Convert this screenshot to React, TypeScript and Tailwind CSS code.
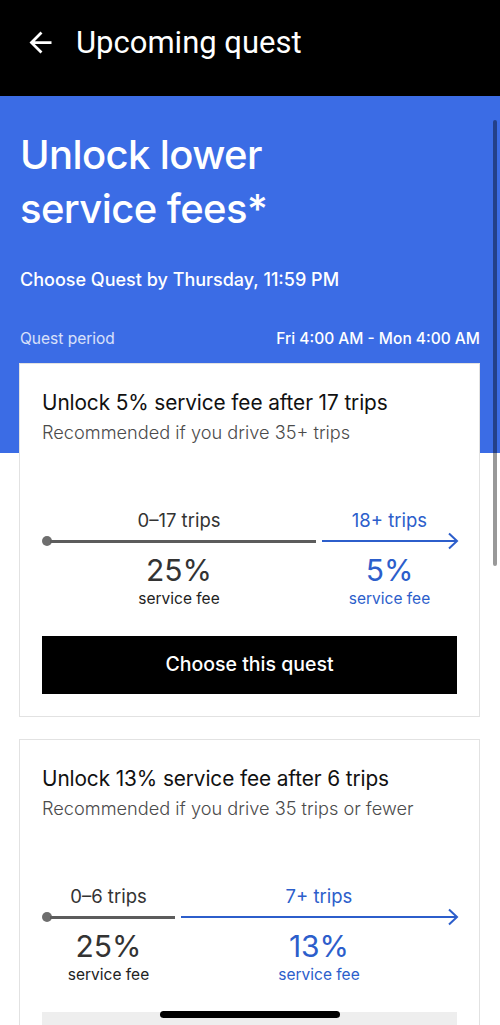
import React from "react";

type Quest = {
  title: string;
  note: string;
  split: number;
  lowLabel: string;
  highLabel: string;
  lowFee: string;
  highFee: string;
  cta: boolean;
};

const quests: Quest[] = [
  {
    title: "Unlock 5% service fee after 17 trips",
    note: "Recommended if you drive 35+ trips",
    split: 274,
    lowLabel: "0–17 trips",
    highLabel: "18+ trips",
    lowFee: "25%",
    highFee: "5%",
    cta: true,
  },
  {
    title: "Unlock 13% service fee after 6 trips",
    note: "Recommended if you drive 35 trips or fewer",
    split: 133,
    lowLabel: "0–6 trips",
    highLabel: "7+ trips",
    lowFee: "25%",
    highFee: "13%",
    cta: false,
  },
];

function BackArrow() {
  return (
    <svg width="33" height="33" viewBox="0 0 24 24" fill="white">
      <path d="M20 11H7.83l5.59-5.59L12 4l-8 8 8 8 1.41-1.41L7.83 13H20v-2z" />
    </svg>
  );
}

function QuestCard({ q }: { q: Quest }) {
  return (
    <div className="border border-[#e2e2e2] bg-white px-[22px] pt-[27px] pb-[22px]">
      <p className="text-[20.8px] leading-[24px] tracking-[-0.1px] text-[#111]">{q.title}</p>
      <p className="mt-[5px] text-[18.2px] leading-[24px] font-light text-[#4b4b4b]">{q.note}</p>

      <div className="mt-[65px] flex gap-[6px]">
        <div className="flex shrink-0 flex-col items-center" style={{ width: q.split }}>
          <span className="text-[18.5px] leading-[22px] text-[#333]">{q.lowLabel}</span>
          <div className="mt-[5px] flex h-[10px] w-full items-center">
            <span className="h-[10px] w-[10px] shrink-0 rounded-full bg-[#6e6e6e]" />
            <span className="-ml-[2px] h-[3px] flex-1 bg-[#5c5c5c]" />
          </div>
          <span className="mt-[7px] text-[30px] leading-[34px] text-[#333]">{q.lowFee}</span>
          <span className="mt-[2px] text-[15.5px] leading-[20px] text-[#222]">service fee</span>
        </div>
        <div className="flex flex-1 flex-col items-center">
          <span className="text-[18.5px] leading-[22px] text-[#2c5ecb]">{q.highLabel}</span>
          <div className="relative mt-[5px] flex h-[10px] w-full items-center">
            <span className="h-[2px] flex-1 bg-[#2c5ecb]" />
            <svg
              width="12"
              height="18"
              viewBox="0 0 12 18"
              className="absolute -right-[2px] top-1/2 -translate-y-1/2"
              fill="none"
              stroke="#2c5ecb"
              strokeWidth="2"
            >
              <path d="M2 1.5l8 7.5-8 7.5" />
            </svg>
          </div>
          <span className="mt-[7px] text-[30px] leading-[34px] text-[#2c5ecb]">{q.highFee}</span>
          <span className="mt-[2px] text-[15.5px] leading-[20px] text-[#2c5ecb]">service fee</span>
        </div>
      </div>

      {q.cta ? (
        <button className="mt-[27px] flex h-[58px] w-full items-center justify-center bg-black text-[19.5px] font-medium text-white">
          Choose this quest
        </button>
      ) : (
        <div className="mt-[27px] h-[58px] w-full bg-[#eeeeee]" />
      )}
    </div>
  );
}

export default function App() {
  return (
    <div
      className="relative h-[1025px] w-[500px] overflow-hidden bg-white"
      style={{ fontFamily: "Inter, 'Noto Sans', sans-serif" }}
    >
      <header className="flex h-[96px] items-start gap-[19px] bg-black pl-[24px] pt-[26px]">
        <BackArrow />
        <h1
          className="-mt-[3px] text-[31px] leading-[40px] text-white"
          style={{ fontFamily: "Roboto, sans-serif" }}
        >
          Upcoming quest
        </h1>
      </header>

      <section className="bg-[#3b6ce5] px-[20px] pt-[32px] pb-[104px] text-white">
        <h2 className="text-[40px] leading-[54px] font-medium tracking-[-0.6px]">
          Unlock lower
          <br />
          service fees*
        </h2>
        <p className="mt-[32px] text-[18px] leading-[24px] font-medium">Choose Quest by Thursday, 11:59 PM</p>
        <div className="mt-[37px] flex items-center justify-between text-[15.5px] leading-[20px]">
          <span className="text-white/80">Quest period</span>
          <span className="font-medium">Fri 4:00 AM - Mon 4:00 AM</span>
        </div>
      </section>

      <div className="relative -mt-[90px] flex flex-col gap-[22px] pl-[19px] pr-[20px]">
        {quests.map((q) => (
          <QuestCard key={q.title} q={q} />
        ))}
      </div>

      <div className="absolute right-[3px] top-[120px] h-[446px] w-[4px] rounded-full bg-black/40" />
      <div className="absolute bottom-[7px] left-[160px] h-[7px] w-[180px] rounded-full bg-black" />
    </div>
  );
}
